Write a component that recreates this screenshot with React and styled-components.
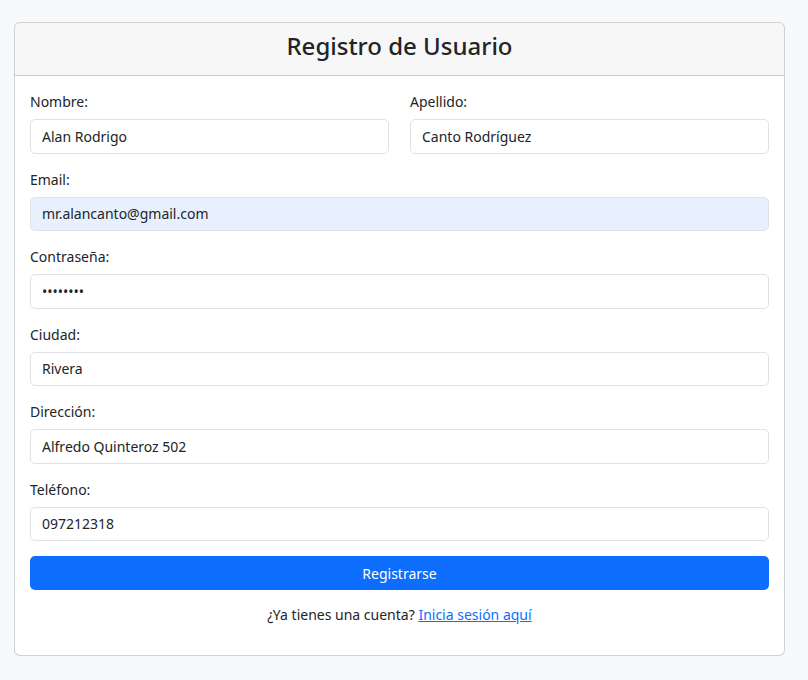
import React from "react";
import styled, { createGlobalStyle } from "styled-components";

const GlobalStyle = createGlobalStyle`
  body {
    margin: 0;
    background: #f8f9fa;
    color: #212529;
    font-family: "Noto Sans", "Open Sans", sans-serif;
    font-size: 14px;
    line-height: 1.5;
  }
  * {
    box-sizing: border-box;
  }
`;

const Page = styled.div`
  padding: 22px 23px 24px 14px;
`;

const Card = styled.div`
  background: #fff;
  border: 1px solid rgba(0, 0, 0, 0.175);
  border-radius: 6px;
  overflow: hidden;
`;

const CardHeader = styled.div`
  padding: 7px 14px;
  background: rgba(0, 0, 0, 0.03);
  border-bottom: 1px solid rgba(0, 0, 0, 0.175);
`;

const Title = styled.h2`
  margin: 0 0 7px;
  font-size: 24px;
  line-height: 31px;
  font-weight: 500;
  text-align: center;
  color: #212529;
`;

const CardBody = styled.form`
  padding: 15px;
`;

const Row = styled.div`
  display: grid;
  grid-template-columns: 1fr 1fr;
  column-gap: 21px;
`;

const Field = styled.div`
  margin-bottom: 15px;
`;

const Label = styled.label`
  display: block;
  margin-bottom: 7px;
  font-size: 14px;
  line-height: 21px;
`;

const Input = styled.input`
  display: block;
  width: 100%;
  height: 34.5px;
  padding: 6px 11px;
  border: 1px solid #dee2e6;
  border-radius: 5px;
  font-family: inherit;
  font-size: 14px;
  color: #212529;
  background: ${(p) => (p.$filled ? "#e8f0fe" : "#fff")};
  outline: none;
`;

const Button = styled.button`
  display: block;
  width: 100%;
  height: 34px;
  border: none;
  border-radius: 5px;
  background: #0d6efd;
  color: #fff;
  font-family: inherit;
  font-size: 14px;
  cursor: pointer;
`;

const Footer = styled.p`
  margin: 14px 0 15px;
  text-align: center;
  line-height: 21px;
`;

const Link = styled.a`
  color: #0d6efd;
  text-decoration: underline;
`;

function FormField({ label, value, type = "text", filled }) {
  return (
    <Field>
      <Label>{label}</Label>
      <Input type={type} defaultValue={value} $filled={filled} />
    </Field>
  );
}

export default function App() {
  return (
    <Page>
      <GlobalStyle />
      <Card>
        <CardHeader>
          <Title>Registro de Usuario</Title>
        </CardHeader>
        <CardBody onSubmit={(e) => e.preventDefault()}>
          <Row>
            <FormField label="Nombre:" value="Alan Rodrigo" />
            <FormField label="Apellido:" value="Canto Rodríguez" />
          </Row>
          <FormField label="Email:" value="mr.alancanto@gmail.com" filled />
          <FormField label="Contraseña:" value="12345678" type="password" />
          <FormField label="Ciudad:" value="Rivera" />
          <FormField label="Dirección:" value="Alfredo Quinteroz 502" />
          <FormField label="Teléfono:" value="097212318" />
          <Button type="submit">Registrarse</Button>
          <Footer>
            ¿Ya tienes una cuenta? <Link href="#">Inicia sesión aquí</Link>
          </Footer>
        </CardBody>
      </Card>
    </Page>
  );
}
